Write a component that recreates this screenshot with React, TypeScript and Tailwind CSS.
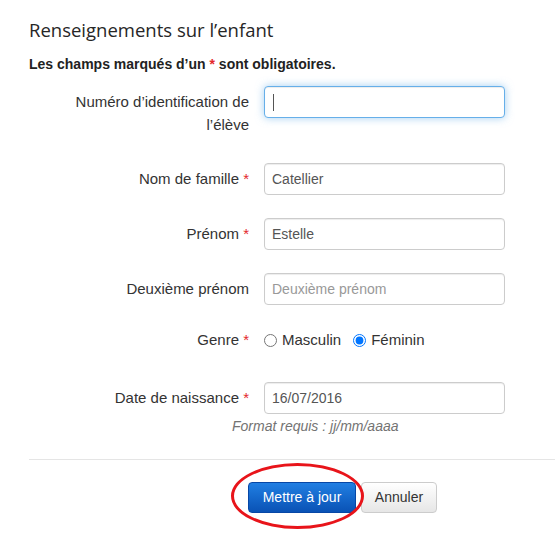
import React from "react";

const Req = () => <span className="text-[#e3272c]"> *</span>;

function Field({ label, required, value, placeholder }: { label: string; required?: boolean; value?: string; placeholder?: string }) {
  return (
    <div className="flex items-center gap-[15px]">
      <label className="w-[200px] text-right leading-[32px]">
        {label}
        {required && <Req />}
      </label>
      <input
        readOnly
        value={value}
        placeholder={placeholder}
        className="h-[32px] w-[241px] rounded-[4px] border border-[#ccc] bg-white pl-[7px] text-[14px] text-[#555] placeholder:text-[#999] shadow-[inset_0_1px_1px_rgba(0,0,0,0.075)] outline-none"
      />
    </div>
  );
}

export default function App() {
  return (
    <div className="relative h-[552px] w-[555px] overflow-hidden bg-white font-['Liberation_Sans',Arial,sans-serif] text-[15px] text-[#333]">
      <div className="pl-[29px] pt-[18px]">
        <h2 className="font-['Open_Sans',sans-serif] text-[18.5px] leading-[24px] text-[#262626]">
          Renseignements sur l’enfant
        </h2>
        <p className="mt-[13px] text-[14px] font-bold leading-[18px] text-[#222]">
          Les champs marqués d’un <span className="text-[#e3272c]">*</span> sont obligatoires.
        </p>

        <div className="ml-[20px]">
          <div className="mt-[13px] flex items-start gap-[15px]">
            <label className="w-[200px] pt-[4px] text-right leading-[23px]">
              Numéro d’identification de l’élève
            </label>
            <div className="flex h-[32px] w-[241px] items-center rounded-[4px] border border-[#66afe9] bg-white pl-[8px] shadow-[inset_0_1px_1px_rgba(0,0,0,0.075),0_0_8px_rgba(102,175,233,0.6)]">
              <span className="h-[17px] w-[1px] bg-[#555]" />
            </div>
          </div>

          <div className="mt-[27px]">
            <Field label="Nom de famille" required value="Catellier" />
          </div>
          <div className="mt-[23px]">
            <Field label="Prénom" required value="Estelle" />
          </div>
          <div className="mt-[23px]">
            <Field label="Deuxième prénom" placeholder="Deuxième prénom" />
          </div>

          <div className="mt-[25px] flex h-[20px] items-center gap-[15px]">
            <span className="w-[200px] text-right leading-[20px]">
              Genre<Req />
            </span>
            <label className="flex items-center gap-[5px]">
              <input type="radio" name="genre" className="m-0 h-[13px] w-[13px]" />
              Masculin
            </label>
            <label className="ml-[-3px] flex items-center gap-[5px]">
              <input type="radio" name="genre" defaultChecked className="m-0 h-[13px] w-[13px] accent-[#0075ff]" />
              Féminin
            </label>
          </div>

          <div className="mt-[32px]">
            <Field label="Date de naissance" required value="16/07/2016" />
          </div>
          <p className="mt-[3px] pl-[183px] text-[14px] italic leading-[18px] text-[#737373]">
            Format requis : jj/mm/aaaa
          </p>
        </div>

        <div className="mt-[24px] border-t border-[#e5e5e5]" />

        <div className="ml-[219px] mt-[22px] flex gap-[5px] text-[14px]">
          <button className="h-[31px] w-[108px] rounded-[4px] border border-[#0747a6] bg-gradient-to-b from-[#217fe3] to-[#0a52b5] text-white">
            Mettre à jour
          </button>
          <button className="h-[31px] w-[76px] rounded-[4px] border border-[#ccc] bg-gradient-to-b from-white to-[#e6e6e6] text-[#333]">
            Annuler
          </button>
        </div>
      </div>

      <div className="pointer-events-none absolute left-[231px] top-[463px] h-[66px] w-[133px] rounded-[50%] border-[3px] border-[#e8141a]" />
    </div>
  );
}
